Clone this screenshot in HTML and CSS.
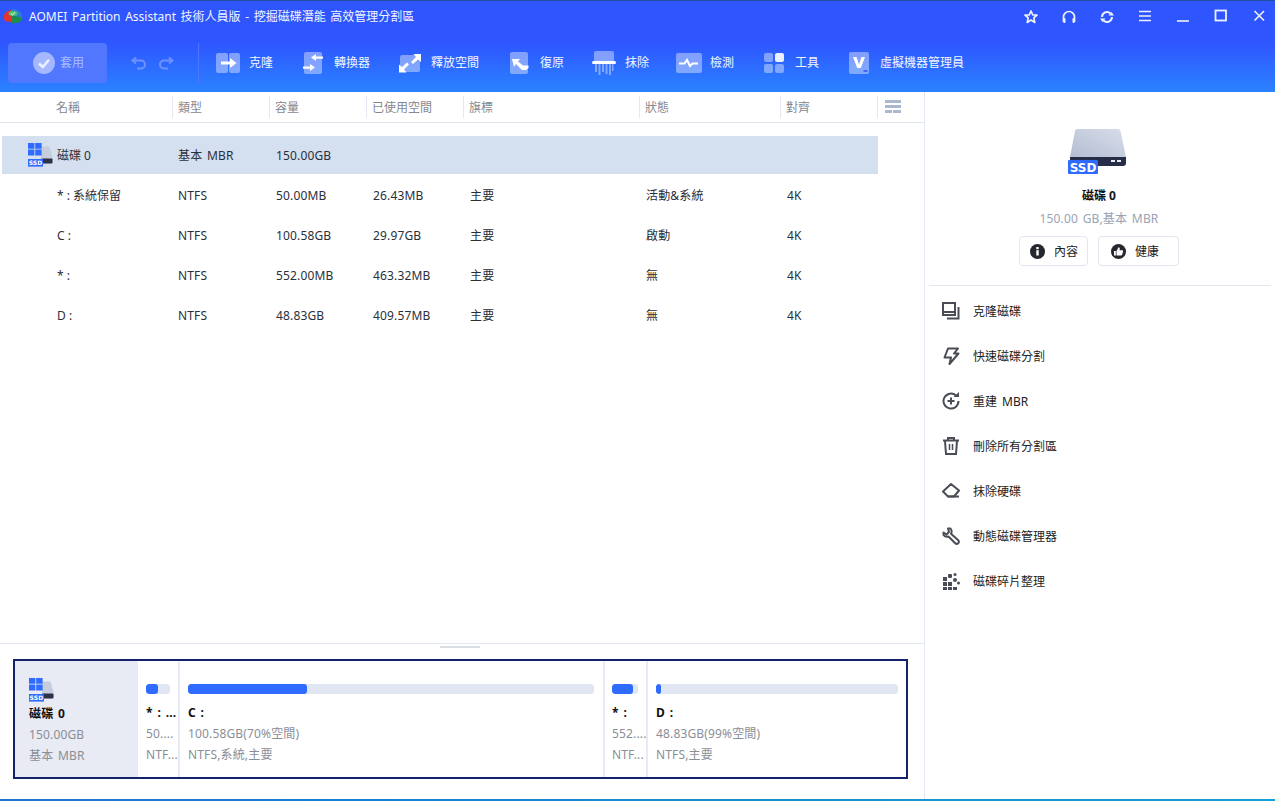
FILE: index.html
```html
<!DOCTYPE html>
<html lang="zh-Hant">
<head>
    <meta charset="UTF-8">
    <title>AOMEI Partition Assistant</title>
    <link rel="stylesheet" href="styles.css">
</head>
<body>
    <header class="topbar">
        <div class="titlebar">
            <svg class="logo" width="20" height="18" viewBox="0 0 20 18">
                <path d="M1 8C1 5 4 3 8 2L9 9V14L4 13.500C2 13 1 12 1 10Z" fill="#e5342c"/>
                <path d="M8 1.500C13 0.500 19 3 19 8V12L15 9L8 6Z" fill="#2b7fd8"/>
                <path d="M9 8L18.500 9V12.500C17 14.500 13 15.500 9 15.500Z" fill="#1d8f4a"/>
                <ellipse cx="10" cy="5.500" rx="4.500" ry="2.500" fill="#4fc36b"/>
                <path d="M8 5.500L9.500 6.800L12 4.300" stroke="#fff" stroke-width="1" fill="none"/>
            </svg>
            <span class="title">AOMEI Partition Assistant 技術人員版 - 挖掘磁碟潛能 高效管理分割區</span>
            <div class="winbtns">
                <span class="winbtn"><svg width="16" height="16" viewBox="0 0 16 16" fill="none" stroke="#eef2ff" stroke-width="1.7"><path d="M8 2L9.8 6H14L10.8 8.9L11.8 13.4L8 11.1L4.2 13.4L5.2 8.9L2 6H6.2Z" stroke-linejoin="round"/></svg></span>
                <span class="winbtn"><svg width="16" height="16" viewBox="0 0 16 16" fill="none" stroke="#eef2ff" stroke-width="1.7"><path d="M2.5 13V8A5.5 5.5 0 0 1 13.500 8V13"/><rect x="2.300" y="9" width="2.200" height="5" rx="1" fill="#eef2ff" stroke="none"/><rect x="11.500" y="9" width="2.200" height="5" rx="1" fill="#eef2ff" stroke="none"/></svg></span>
                <span class="winbtn"><svg width="16" height="16" viewBox="0 0 16 16" fill="none" stroke="#eef2ff" stroke-width="2"><path d="M3 8A5 5 0 0 1 11.500 4.500"/><path d="M13 8A5 5 0 0 1 4.500 11.500"/><path d="M9.500 6.500H15L12.500 3Z" fill="#eef2ff" stroke="none"/><path d="M6.500 9.500H1L3.500 13Z" fill="#eef2ff" stroke="none"/></svg></span>
                <span class="winbtn"><svg width="14" height="14" viewBox="0 0 14 14" stroke="#eef2ff" stroke-width="1.600"><path d="M1 2.500H13M1 7H13M1 11.500H13"/></svg></span>
                <span class="winbtn"><svg width="14" height="14" viewBox="0 0 14 14" stroke="#eef2ff" stroke-width="1.600"><path d="M1 12H13"/></svg></span>
                <span class="winbtn"><svg width="14" height="14" viewBox="0 0 14 14" fill="none" stroke="#eef2ff" stroke-width="1.800"><rect x="1.500" y="1.500" width="10.500" height="10"/></svg></span>
                <span class="winbtn"><svg width="14" height="14" viewBox="0 0 14 14" stroke="#eef2ff" stroke-width="1.600"><path d="M2.500 2L12 11.500M12 2L2.500 11.500"/></svg></span>
            </div>
        </div>
        <div class="toolbar">
            <div class="apply">
                <svg width="22" height="22" viewBox="0 0 22 22"><circle cx="11" cy="11" r="11" fill="#a5b8ff"/><path d="M6 11.500L9.800 15L16 7.800" stroke="#eef2ff" stroke-width="2.400" fill="none"/></svg>
                <span>套用</span>
            </div>
            <div class="history">
                <svg width="16" height="14" viewBox="0 0 16 14" fill="none" stroke="#6f92ff" stroke-width="2"><path d="M5 1.500L1.500 4.500L5 7.500"/><path d="M2 4.500H10A4 4 0 0 1 10 12.500H6"/></svg>
                <svg width="16" height="14" viewBox="0 0 16 14" fill="none" stroke="#6f92ff" stroke-width="2"><path d="M11 1.500L14.500 4.500L11 7.500"/><path d="M14 4.500H6A4 4 0 0 0 6 12.500H10"/></svg>
            </div>
            <div class="tool-sep"></div>
            <div class="tools">
                <div class="tool">
                    <svg width="26" height="26" viewBox="0 0 26 26"><rect x="1" y="3" width="12" height="20" rx="2" class="ti"/><rect x="14" y="3" width="11" height="20" rx="2" class="ti"/><path d="M6 11.500H15V8L21.500 13L15 18V14.500H6Z" fill="#fff"/></svg>
                    <span>克隆</span>
                </div>
                <div class="tool">
                    <svg width="26" height="26" viewBox="0 0 26 26"><rect x="4" y="2" width="18" height="22" rx="2" class="ti"/><path d="M23 6.500H16V4L11 7.500L16 11V8.800H23Z" fill="#fff"/><path d="M3 16.500H10V14L15 17.500L10 21V18.800H3Z" fill="#fff"/></svg>
                    <span>轉換器</span>
                </div>
                <div class="tool">
                    <svg width="26" height="26" viewBox="0 0 26 26"><rect x="3" y="5" width="20" height="17" rx="2" class="ti"/><path d="M24 4V12L21 9.500L16 14L14 12L19 7L16.500 4Z" fill="#fff"/><path d="M2 22.500V14.500L5 17L10 12.500L12 14.500L7 19.500L9.500 22.500Z" fill="#fff"/></svg>
                    <span>釋放空間</span>
                </div>
                <div class="tool">
                    <svg width="26" height="26" viewBox="0 0 26 26"><rect x="4" y="2" width="18" height="22" rx="2" class="ti"/><path d="M6 9H14L12 11.500L17 15.500H22.500V18L20 20H16L10 14L8 17Z" fill="#fff"/></svg>
                    <span>復原</span>
                </div>
                <div class="tool">
                    <svg width="26" height="26" viewBox="0 0 26 26"><path d="M3 3Q3 1 5 1H21Q23 1 23 3V11H3Z" class="ti"/><path d="M4 14H6V22H4ZM7.500 14H9.500V25H7.500ZM11 14H13V22H11ZM14.500 14H16.500V24H14.500ZM18 14H20V25H18ZM21 14H22.500V21H21Z" class="ti"/><rect x="1" y="11" width="24" height="3" rx="1.500" fill="#fff"/></svg>
                    <span>抹除</span>
                </div>
                <div class="tool">
                    <svg width="26" height="26" viewBox="0 0 26 26"><rect x="0" y="3" width="26" height="20" rx="2" class="ti"/><path d="M3 13.500H8.500L11 10L14 16L16.500 13.500H22" stroke="#fff" stroke-width="2" fill="none"/></svg>
                    <span>檢測</span>
                </div>
                <div class="tool">
                    <svg width="26" height="26" viewBox="0 0 26 26"><rect x="3" y="3" width="9" height="9" rx="2" class="ti"/><rect x="14" y="3" width="9" height="9" rx="2" fill="#eaf0ff"/><rect x="3" y="14" width="9" height="9" rx="2" class="ti"/><rect x="14" y="14" width="9" height="9" rx="2" class="ti"/></svg>
                    <span>工具</span>
                </div>
                <div class="tool">
                    <svg width="26" height="26" viewBox="0 0 26 26"><rect x="3" y="2" width="20" height="22" rx="2" class="ti"/><path d="M7 7H10.500L13 14.500L15.500 7H19L14.800 18H11.200Z" fill="#fff"/><rect x="17.500" y="20" width="4" height="2" fill="#3d66ff"/></svg>
                    <span>虛擬機器管理員</span>
                </div>
            </div>
        </div>
    </header>

    <div class="main">
        <div class="left">
            <div class="table-head">
                <div class="th th-name">名稱</div>
                <div class="th">類型</div>
                <div class="th">容量</div>
                <div class="th">已使用空間</div>
                <div class="th">旗標</div>
                <div class="th">狀態</div>
                <div class="th">對齊</div>
                <div class="th">
                    <svg class="cols-icon" width="16" height="13" viewBox="0 0 16 13" fill="#aab7cc"><rect width="16" height="3"/><rect y="5" width="16" height="3"/><rect y="10" width="7" height="3"/><rect x="8" y="10" width="8" height="3"/></svg>
                </div>
            </div>
            <div class="table-body">
                <div class="row row-disk">
                    <div class="cell-name">
                        <svg width="25" height="24" viewBox="0 0 25 24">
                            <path d="M13 3.500H20.500Q21.500 3.500 22 5L24.500 14V19Q24.500 20.500 23 20.500H13Z" fill="#c6cddd"/>
                            <rect x="13" y="15.500" width="11.500" height="5" rx="1" fill="#2a3149"/>
                            <path d="M0 0H6.400V5.800H0ZM7.200 0H13.600V5.800H7.200ZM0 6.600H6.400V12.400H0ZM7.200 6.600H13.600V12.400H7.200Z" fill="#2f6bff"/>
                            <rect x="0" y="16" width="15" height="7.600" fill="#2f6bff"/>
                            <text x="7.500" y="22.400" class="ssd-small">SSD</text>
                        </svg>
                        磁碟 0
                    </div>
                    <div>基本 MBR</div><div>150.00GB</div><div></div><div></div><div></div><div></div>
                </div>
                <div class="row">
                    <div class="cell-name">* : 系統保留</div>
                    <div>NTFS</div><div>50.00MB</div><div>26.43MB</div><div>主要</div><div>活動&amp;系統</div><div>4K</div>
                </div>
                <div class="row">
                    <div class="cell-name">C :</div>
                    <div>NTFS</div><div>100.58GB</div><div>29.97GB</div><div>主要</div><div>啟動</div><div>4K</div>
                </div>
                <div class="row">
                    <div class="cell-name">* :</div>
                    <div>NTFS</div><div>552.00MB</div><div>463.32MB</div><div>主要</div><div>無</div><div>4K</div>
                </div>
                <div class="row">
                    <div class="cell-name">D :</div>
                    <div>NTFS</div><div>48.83GB</div><div>409.57MB</div><div>主要</div><div>無</div><div>4K</div>
                </div>
            </div>
            <div class="map-area">
                <div class="grip"></div>
                <div class="map">
                    <div class="map-disk">
                        <svg width="25" height="24" viewBox="0 0 25 24">
                            <path d="M13 3.500H20.500Q21.500 3.500 22 5L24.500 14V19Q24.500 20.500 23 20.500H13Z" fill="#c6cddd"/>
                            <rect x="13" y="15.500" width="11.500" height="5" rx="1" fill="#2a3149"/>
                            <path d="M0 0H6.400V5.800H0ZM7.200 0H13.600V5.800H7.200ZM0 6.600H6.400V12.400H0ZM7.200 6.600H13.600V12.400H7.200Z" fill="#2f6bff"/>
                            <rect x="0" y="16" width="15" height="7.600" fill="#2f6bff"/>
                            <text x="7.500" y="22.400" class="ssd-small">SSD</text>
                        </svg>
                        <div class="map-name">磁碟 0</div>
                        <div class="map-text">150.00GB</div>
                        <div class="map-text">基本 MBR</div>
                    </div>
                    <div class="seg seg-a">
                        <div class="bar"><div class="fill fill-a"></div></div>
                        <div class="map-name">* : ...</div>
                        <div class="map-text">50....</div>
                        <div class="map-text">NTF...</div>
                    </div>
                    <div class="seg seg-c">
                        <div class="bar"><div class="fill fill-c"></div></div>
                        <div class="map-name">C :</div>
                        <div class="map-text">100.58GB(70%空間)</div>
                        <div class="map-text">NTFS,系統,主要</div>
                    </div>
                    <div class="seg seg-b">
                        <div class="bar"><div class="fill fill-b"></div></div>
                        <div class="map-name">* :</div>
                        <div class="map-text">552....</div>
                        <div class="map-text">NTF...</div>
                    </div>
                    <div class="seg seg-d">
                        <div class="bar"><div class="fill fill-d"></div></div>
                        <div class="map-name">D :</div>
                        <div class="map-text">48.83GB(99%空間)</div>
                        <div class="map-text">NTFS,主要</div>
                    </div>
                </div>
            </div>
        </div>

        <aside class="side">
            <svg class="side-disk" width="58" height="46" viewBox="0 0 58 46">
                <defs>
                    <linearGradient id="drive" x1="0" y1="1" x2="1" y2="0">
                        <stop offset="0" stop-color="#b4bdd3"/>
                        <stop offset="1" stop-color="#d8dde9"/>
                    </linearGradient>
                </defs>
                <path d="M9 1H50Q52 1 52.500 3L58 29H2L7 3Q7.500 1 9 1Z" fill="url(#drive)"/>
                <path d="M2 29H58V35Q58 38 55 38H5Q2 38 2 35Z" fill="#262d47"/>
                <rect x="43" y="32" width="4" height="2" fill="#e8ecf5"/>
                <rect x="49" y="32" width="4" height="2" fill="#e8ecf5"/>
                <rect x="0" y="32" width="30" height="14" rx="1" fill="#2f6bff"/>
                <text x="15" y="43.500" class="ssd-large">SSD</text>
            </svg>
            <div class="side-name">磁碟 0</div>
            <div class="side-sub">150.00 GB,基本 MBR</div>
            <div class="side-btns">
                <div class="side-btn side-btn-info">
                    <svg width="15" height="15" viewBox="0 0 15 15"><circle cx="7.500" cy="7.500" r="7.500" fill="#24272e"/><rect x="6.300" y="6.200" width="2.400" height="5.300" fill="#fff"/><rect x="6.300" y="3" width="2.400" height="2.200" fill="#fff"/></svg>
                    內容
                </div>
                <div class="side-btn side-btn-health">
                    <svg width="15" height="15" viewBox="0 0 15 15"><circle cx="7.500" cy="7.500" r="7.500" fill="#24272e"/><path d="M3 7H4.800V11.500H3ZM5.500 7L7.500 3.200Q9 3.200 8.800 5L8.500 6.300H11.500Q12.400 6.500 12 7.800L11.200 10.800Q11 11.500 10 11.500H5.500Z" fill="#fff"/></svg>
                    健康
                </div>
            </div>
            <div class="side-line"></div>
            <ul class="actions">
                <li class="action">
                    <svg width="18" height="18" viewBox="0 0 18 18" fill="none" stroke="#4a4d55" stroke-width="2"><rect x="1" y="1" width="12" height="12"/><path d="M1 10H13"/><path d="M16.500 5V16.500H5"/></svg>
                    <span>克隆磁碟</span>
                </li>
                <li class="action">
                    <svg width="18" height="18" viewBox="0 0 18 18" fill="none" stroke="#4a4d55" stroke-width="2" stroke-linejoin="round"><path d="M6 1.500H16L12 6.500H16.500L7.500 17L9 10.500H2.500Z"/></svg>
                    <span>快速磁碟分割</span>
                </li>
                <li class="action">
                    <svg width="18" height="18" viewBox="0 0 18 18" fill="none" stroke="#4a4d55" stroke-width="2"><path d="M14 3.500A7.500 7.500 0 1 0 16.500 9"/><path d="M11.500 5H17V0Z" fill="#4a4d55" stroke="none"/><path d="M9 5.500V12.500M5.500 9H12.500"/></svg>
                    <span>重建 MBR</span>
                </li>
                <li class="action">
                    <svg width="18" height="18" viewBox="0 0 18 18" fill="none" stroke="#4a4d55" stroke-width="2"><path d="M1 3.500H17"/><path d="M6 3V1H12V3"/><path d="M3 4L4 17H14L15 4"/><path d="M7.500 7V13M10.500 7V13" stroke-width="1.500"/></svg>
                    <span>刪除所有分割區</span>
                </li>
                <li class="action">
                    <svg width="18" height="18" viewBox="0 0 18 18" fill="none" stroke="#4a4d55" stroke-width="2" stroke-linejoin="round"><path d="M9 2L17 8.500L12 14.500H6L1 9.500Z"/><path d="M6 14.500H17"/></svg>
                    <span>抹除硬碟</span>
                </li>
                <li class="action">
                    <svg width="18" height="18" viewBox="0 0 18 18" fill="none" stroke="#4a4d55" stroke-width="2" stroke-linejoin="round"><path d="M6 1.500L8.500 1.500Q10.500 4 9 6.800L16.500 13.500Q17.500 15 16 16.500Q14.500 17.500 13 16L6.500 9.500Q3.500 10.500 1.500 8L1.500 5.500L4.500 7.500L7 5Z"/></svg>
                    <span>動態磁碟管理器</span>
                </li>
                <li class="action">
                    <svg width="18" height="18" viewBox="0 0 18 18" fill="#4a4d55"><rect x="1" y="5" width="4" height="4"/><rect x="1" y="10" width="4" height="4"/><rect x="1" y="15" width="4" height="3"/><rect x="6" y="10" width="4" height="4"/><rect x="6" y="15" width="4" height="3"/><rect x="11" y="15" width="4" height="3"/><rect x="6" y="2" width="4" height="4" rx="1"/><rect x="11" y="6" width="4" height="4" rx="2"/><circle cx="13" cy="2.500" r="1.500"/><circle cx="16.500" cy="11" r="1.500"/></svg>
                    <span>磁碟碎片整理</span>
                </li>
            </ul>
        </aside>
    </div>
    <div class="bottom-line"></div>
</body>
</html>
```

FILE: styles.css
```css
* {
    box-sizing: border-box;
}
html, body {
    height: 100%;
}
body {
    margin: 0;
    display: flex;
    flex-direction: column;
    overflow: hidden;
    background: #fff;
    color: #2b2f3a;
    font-family: "Noto Sans", "Noto Sans CJK TC", sans-serif;
    font-size: 12px;
}
svg {
    display: block;
    flex: none;
}
.ssd-small {
    font: bold 6px "DejaVu Sans", sans-serif;
    fill: #fff;
    text-anchor: middle;
}
.ssd-large {
    font: bold 12px "DejaVu Sans", sans-serif;
    fill: #fff;
    text-anchor: middle;
}

/* header */
.topbar {
    height: 92px;
    flex: none;
    color: #fff;
    border-top: 1px solid #22509f;
    background: linear-gradient(180deg, #2f55ff 0%, #2f55ff 45%, #2a82ff 100%);
}
.titlebar {
    height: 31px;
    display: flex;
    align-items: center;
    padding-left: 3px;
}
.logo {
    margin-right: 6px;
}
.title {
    padding-bottom: 2px;
    color: #f2f5ff;
    word-spacing: 1.5px;
}
.winbtns {
    margin-left: auto;
    margin-right: -3px;
    display: flex;
}
.winbtn {
    width: 38px;
    display: flex;
    justify-content: center;
}
.toolbar {
    height: 40px;
    margin-top: 11px;
    padding-left: 8px;
    display: flex;
    align-items: center;
}
.apply {
    width: 99px;
    height: 40px;
    display: flex;
    align-items: center;
    gap: 5px;
    padding-left: 25px;
    border-radius: 4px;
    background: #5277ff;
    color: #a9bcff;
}
.apply span,
.tool span {
    padding-bottom: 2px;
}
.history {
    display: flex;
    gap: 11px;
    margin-left: 24px;
}
.tool-sep {
    width: 1px;
    height: 40px;
    margin-left: 24px;
    background: #4f76ff;
}
.tools {
    display: flex;
    gap: 27px;
    margin-left: 16px;
}
.tool {
    display: flex;
    align-items: center;
    gap: 8px;
    color: #f2f5ff;
}
.ti {
    fill: #fff;
    fill-opacity: 0.4;
}

/* table */
.main {
    flex: 1;
    min-height: 0;
    display: flex;
}
.left {
    width: 925px;
    display: flex;
    flex-direction: column;
    border-right: 1px solid #e1e6f0;
}
.table-head {
    height: 31px;
    flex: none;
    display: grid;
    grid-template-columns: 172px 97px 97px 97px 176px 141px 97px 47px;
    align-items: center;
    border-bottom: 1px solid #dfe5ef;
    color: #85888f;
}
.th {
    height: 22px;
    line-height: 24px;
    padding-left: 5px;
    border-left: 1px solid #e4e8f1;
}
.th-name {
    padding-left: 56px;
    border-left: none;
}
.cols-icon {
    margin: 4px 0 0 2px;
}
.table-body {
    flex: 1;
    padding: 13px 0 0 2px;
}
.row {
    width: 876px;
    height: 40px;
    display: grid;
    grid-template-columns: 176px 98px 97px 97px 176px 141px 91px;
    align-items: center;
    letter-spacing: 0.15px;
    word-spacing: 1.5px;
}
.row-disk {
    height: 38px;
    margin-bottom: 1px;
    background: #d4dfef;
}
.cell-name {
    display: flex;
    align-items: center;
    padding-left: 55px;
    letter-spacing: 0;
    word-spacing: 0;
}
.row-disk .cell-name {
    padding-left: 26px;
    gap: 4px;
}

/* disk map */
.map-area {
    position: relative;
    height: 156px;
    flex: none;
    padding: 15px 0 0 13px;
    border-top: 1px solid #e1e6f0;
}
.grip {
    position: absolute;
    left: 440px;
    top: 2px;
    width: 40px;
    height: 2px;
    background: #d9dde6;
}
.map {
    width: 895px;
    height: 120px;
    display: flex;
    border: 2px solid #14216b;
    letter-spacing: 0.15px;
    word-spacing: 1.5px;
}
.map-disk {
    width: 123px;
    padding: 17px 0 0 14px;
    background: #e8ebf3;
}
.map-name {
    font-weight: bold;
    color: #111;
    line-height: 20px;
    white-space: nowrap;
}
.map-text {
    margin-top: 1px;
    line-height: 20px;
    color: #8b8e96;
    white-space: nowrap;
}
.map-disk .map-name {
    margin: 2px 0 1px;
}
.seg {
    padding: 23px 0 0 8px;
    border-right: 2px solid #e8ebf3;
    min-width: 0;
}
.seg .map-name {
    margin-top: 9px;
}
.seg-a {
    width: 42px;
}
.seg-c {
    width: 425px;
}
.seg-b {
    width: 43px;
    padding-left: 7px;
}
.seg-d {
    flex: 1;
    border-right: none;
}
.bar {
    height: 10px;
    border-radius: 3px;
    background: #e1e7f2;
    overflow: hidden;
}
.seg-a .bar {
    width: 24px;
}
.seg-c .bar {
    width: 406px;
}
.seg-b .bar {
    width: 26px;
}
.seg-d .bar {
    width: 242px;
}
.fill {
    height: 10px;
    border-radius: 3px;
    background: #2f6bff;
}
.fill-a {
    width: 12px;
}
.fill-c {
    width: 119px;
}
.fill-b {
    width: 21px;
}
.fill-d {
    width: 5px;
}

/* right panel */
.side {
    flex: 1;
    display: flex;
    flex-direction: column;
    align-items: center;
    padding-right: 2px;
}
.side-disk {
    margin: 36px 4px 0 0;
}
.side-name {
    margin-top: 12px;
    line-height: 20px;
    font-weight: bold;
    color: #111;
}
.side-sub {
    margin-top: 3px;
    line-height: 20px;
    color: #98a3b3;
    letter-spacing: 0.15px;
    word-spacing: 1.5px;
}
.side-btns {
    display: flex;
    gap: 10px;
    margin-top: 7px;
}
.side-btn {
    height: 30px;
    display: flex;
    align-items: center;
    gap: 9px;
    padding-left: 10px;
    border: 1px solid #e1e6f0;
    border-radius: 4px;
    color: #222;
}
.side-btn-info {
    width: 69px;
}
.side-btn-health {
    width: 81px;
    padding-left: 12px;
}
.side-line {
    width: 342px;
    height: 1px;
    margin: 19px 0 0 2px;
    background: #e1e6f0;
}
.actions {
    width: 100%;
    margin: 3px 0 0;
    padding: 0;
    list-style: none;
}
.action {
    height: 45px;
    display: flex;
    align-items: center;
    gap: 13px;
    padding-left: 17px;
    color: #222;
    word-spacing: 2px;
}
.action span {
    padding-bottom: 2px;
}
.action svg {
    margin-bottom: 2px;
}
.bottom-line {
    height: 2px;
    flex: none;
    background: linear-gradient(90deg, #1f74c9, #12a0d8);
}
```
